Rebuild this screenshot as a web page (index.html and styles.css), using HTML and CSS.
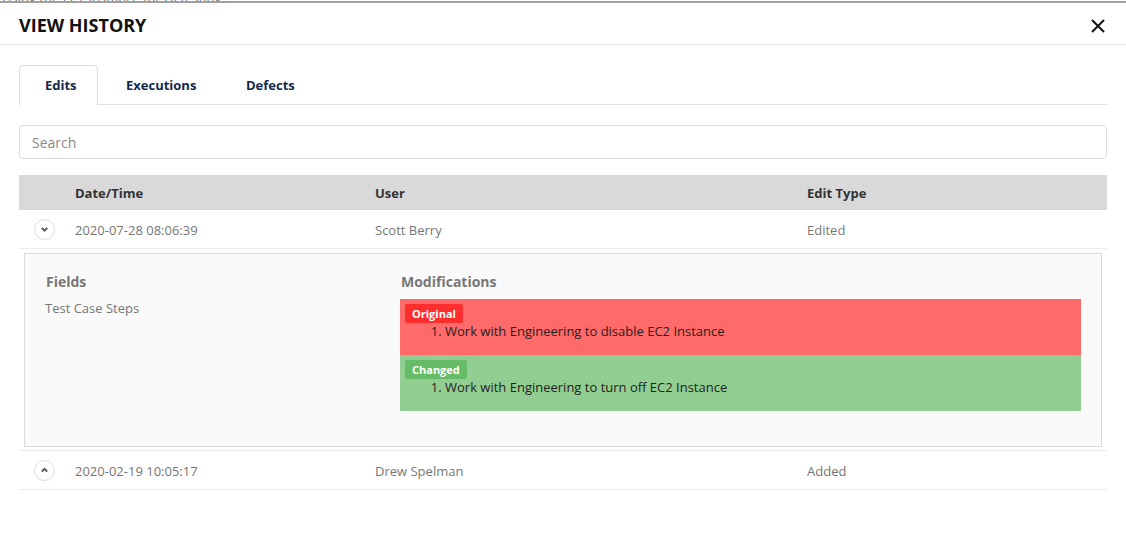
FILE: index.html
```html
<!DOCTYPE html>
<html>
<head>
<meta charset="utf-8">
<link rel="stylesheet" href="styles.css">
</head>
<body>
<div class="backdrop"><span>Using the EC2 instance for UI testing</span></div>
<div class="modal">
  <div class="modal-header">
    <h1 class="title">VIEW HISTORY</h1>
    <button class="close" aria-label="Close">
      <svg width="16" height="16" viewBox="0 0 16 16"><path d="M2 2 L14 14 M14 2 L2 14" stroke="#111" stroke-width="2" fill="none"/></svg>
    </button>
  </div>
  <div class="modal-body">
    <div class="tabs">
      <div class="tab active">Edits</div>
      <div class="tab">Executions</div>
      <div class="tab">Defects</div>
    </div>
    <div class="search">Search</div>
    <div class="table">
      <div class="row head">
        <div class="c0"></div>
        <div class="c1">Date/Time</div>
        <div class="c2">User</div>
        <div class="c3">Edit Type</div>
      </div>
      <div class="row">
        <div class="c0"><span class="chev"><svg width="10" height="10" viewBox="0 0 10 10"><path d="M2.5 3.5 L5 6 L7.5 3.5" stroke="#555" stroke-width="1.8" fill="none"/></svg></span></div>
        <div class="c1">2020-07-28 08:06:39</div>
        <div class="c2">Scott Berry</div>
        <div class="c3">Edited</div>
      </div>
      <div class="detail-wrap">
        <div class="detail">
          <div class="fields">
            <div class="dh">Fields</div>
            <div class="dv">Test Case Steps</div>
          </div>
          <div class="mods">
            <div class="dh">Modifications</div>
            <div class="box orig">
              <span class="badge b-orig">Original</span>
              <ol class="steps"><li>Work with Engineering to disable EC2 Instance</li></ol>
            </div>
            <div class="box chg">
              <span class="badge b-chg">Changed</span>
              <ol class="steps"><li>Work with Engineering to turn off EC2 Instance</li></ol>
            </div>
          </div>
        </div>
      </div>
      <div class="row">
        <div class="c0"><span class="chev"><svg width="10" height="10" viewBox="0 0 10 10"><path d="M2.5 6 L5 3.5 L7.5 6" stroke="#555" stroke-width="1.8" fill="none"/></svg></span></div>
        <div class="c1">2020-02-19 10:05:17</div>
        <div class="c2">Drew Spelman</div>
        <div class="c3">Added</div>
      </div>
    </div>
  </div>
</div>
</body>
</html>
```
FILE: styles.css
```css
* { box-sizing: border-box; }
html, body { margin: 0; padding: 0; background: #fff; }
body { font-family: "Open Sans", "Liberation Sans", sans-serif; width: 1126px; height: 550px; overflow: hidden; }
.backdrop {
  height: 3px; overflow: hidden; border-bottom: 2px solid #a0a0a0;
  font-size: 13px; line-height: 4px; color: #777; padding-left: 2px;
}
.backdrop span { display: block; margin-top: -4px; }
.modal { background: #fff; }
.modal-header {
  height: 42px; border-bottom: 1px solid #e2e2e2;
  display: flex; align-items: center; justify-content: space-between;
  padding: 0 19px;
}
.title { margin: 0; font-size: 18px; font-weight: 700; color: #111; padding-top: 3px; }
.close { border: 0; background: none; padding: 0; width: 16px; height: 16px; display: flex; margin-right: 1px; margin-top: 5px; }
.modal-body { padding: 20px 19px 0 19px; }
.tabs { display: flex; border-bottom: 1px solid #dedede; height: 40px; }
.tab {
  font-size: 13px; font-weight: 700; color: #13294b;
  height: 40px; display: flex; align-items: center; justify-content: flex-start;
  border: 1px solid transparent; border-bottom: 0; padding-bottom: 1px;
}
.tab:nth-child(1) { width: 79px; padding-left: 25px; }
.tab:nth-child(2) { width: 120px; padding-left: 27px; }
.tab:nth-child(3) { width: 90px; padding-left: 27px; }
.tab.active { border-color: #dedede; border-radius: 4px 4px 0 0; background: #fff; margin-bottom: -1px; }
.search {
  margin-top: 20px; height: 34px; border: 1px solid #dcdcdc; border-radius: 4px;
  font-size: 14px; color: #8a8a8a; padding-left: 12px; display: flex; align-items: center;
}
.table { margin-top: 16px; }
.row { display: flex; align-items: center; height: 39px; border-bottom: 1px solid #ebebeb; font-size: 13px; color: #777; padding-top: 1px; }
.row.head { background: #d9d9d9; height: 35px; border-bottom: 0; font-weight: 700; color: #333; padding-top: 0; }
.c0 { width: 56px; display: flex; align-items: center; padding-left: 15px; }
.c1 { width: 300px; }
.c2 { width: 432px; }
.c3 { flex: 1; }
.chev {
  width: 21px; height: 21px; border: 1px solid #dcdcdc; border-radius: 50%;
  display: flex; align-items: center; justify-content: center;
}
.chev svg { width: 11px; height: 11px; }
.detail-wrap { padding: 4px 5px 3px 5px; border-bottom: 1px solid #ebebeb; }
.detail {
  background: #fafafa; border: 1px solid #dadada; display: flex;
  padding: 18px 20px 34px 20px; height: 194px;
}
.fields { width: 355px; }
.mods { flex: 1; }
.dh { font-size: 14px; font-weight: 700; color: #777; line-height: 19px; padding-left: 1px; }
.dv { font-size: 13px; color: #777; margin-top: 8px; }
.mods .dh { margin-bottom: 8px; }
.box { height: 56px; padding: 5px 5px 0 5px; }
.orig { background: #ff6a6a; }
.chg { background: #92cd92; }
.badge {
  display: block; width: fit-content; font-size: 11px; font-weight: 700; color: #fff;
  height: 19px; line-height: 19px; padding: 0 7px; border-radius: 2px;
}
.b-orig { background: #ff2e2e; }
.b-chg { background: #66bb66; }
.steps { margin: 0; padding-left: 40px; font-size: 13px; color: #1f1f1f; line-height: 17px; }
```
